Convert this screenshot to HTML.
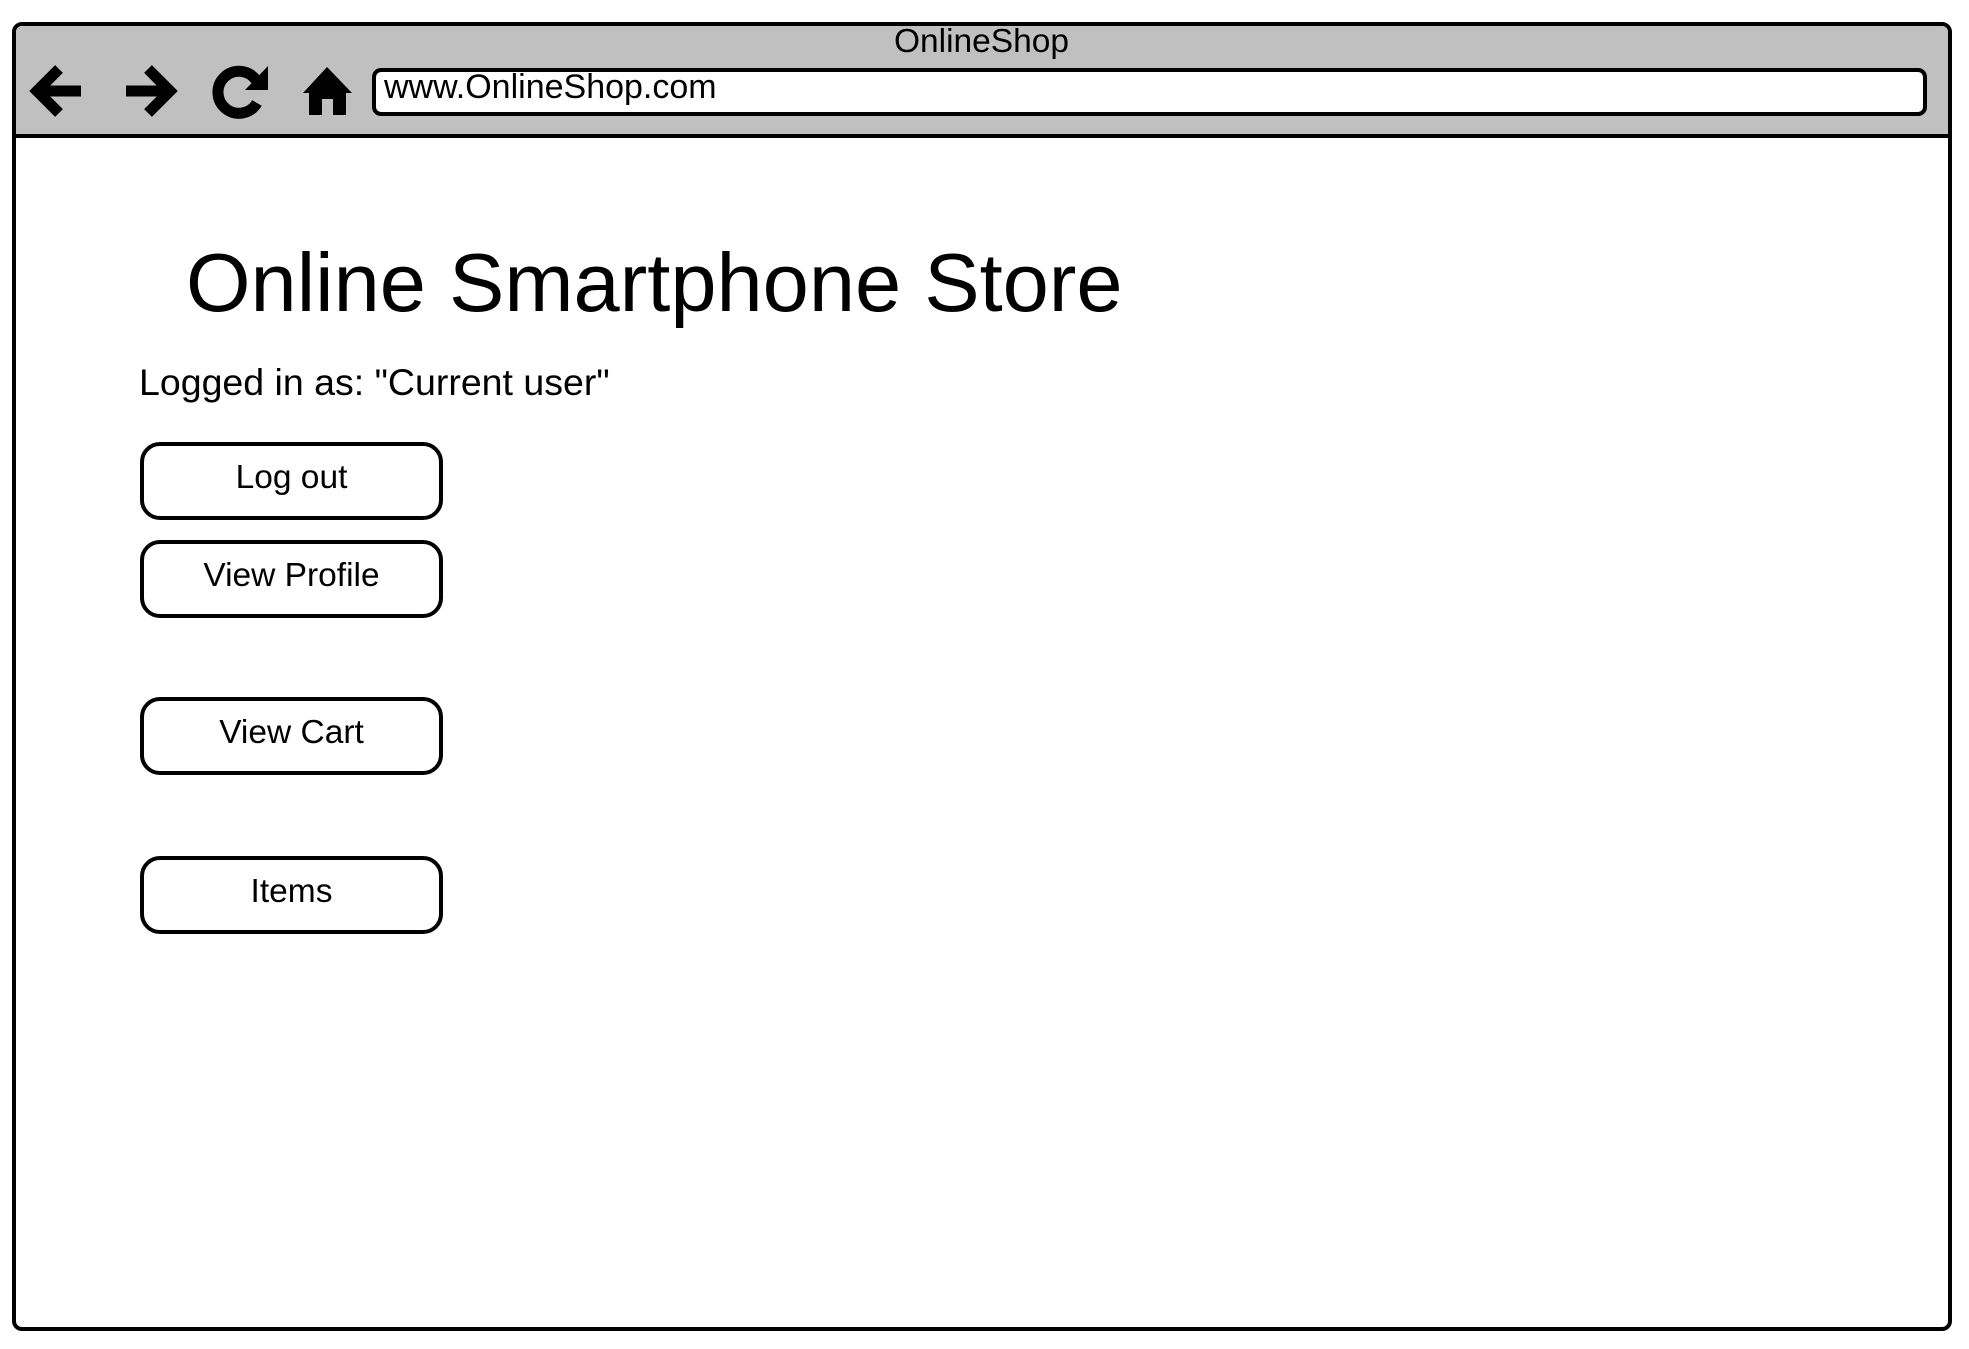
<!DOCTYPE html>
<html><head><meta charset="utf-8"><style>
html,body{margin:0;padding:0;background:#fff;width:1969px;height:1349px;overflow:hidden;font-family:"Liberation Sans",Arial,sans-serif;color:#000}
.a{position:absolute;line-height:1;white-space:nowrap}
.frame{position:absolute;left:12px;top:22px;width:1932px;height:1301px;border:4px solid #000;border-radius:10px;overflow:hidden;background:#fff}
.bar{position:absolute;left:0;top:0;width:100%;height:108px;background:#c0c0c0;border-bottom:4px solid #000}
.url{position:absolute;left:372px;top:68px;width:1547px;height:40px;border:4px solid #000;border-radius:9px;background:#fff}
.btn{position:absolute;left:140px;width:295px;height:70px;border:4px solid #000;border-radius:20px;font-size:33.5px;text-align:center;line-height:64px}
</style></head><body>
<div class="frame"><div class="bar"></div></div>
<div class="url"></div>
<div class="a" style="left:-3px;width:1969px;text-align:center;top:25px;font-size:33.5px">OnlineShop</div>
<div class="a" style="left:384px;top:70px;font-size:34px">www.OnlineShop.com</div>
<svg style="position:absolute;left:0;top:0" width="400" height="140">
<g stroke="#000" stroke-width="11" fill="none" stroke-linejoin="miter">
<polyline points="59,69 37,91 59,113"/><line x1="37" y1="91" x2="81" y2="91"/>
<polyline points="148,69 170,91 148,113"/><line x1="126" y1="91" x2="170" y2="91"/>
<path d="M256 80 A21 21 0 1 0 257 103"/>
</g>
<polygon points="245,90 268,90 268,66" fill="#000"/>
<polygon points="327,67 352,93 346,93 346,115 333,115 333,99 322,99 322,115 309,115 309,93 303,93" fill="#000"/>
</svg>
<div class="a" style="left:186px;top:241px;font-size:83px">Online Smartphone Store</div>
<div class="a" style="left:139px;top:364px;font-size:37.5px">Logged in as: "Current user"</div>
<div class="btn" style="top:442px">Log out</div>
<div class="btn" style="top:540px">View Profile</div>
<div class="btn" style="top:697px">View Cart</div>
<div class="btn" style="top:856px">Items</div>
</body></html>
